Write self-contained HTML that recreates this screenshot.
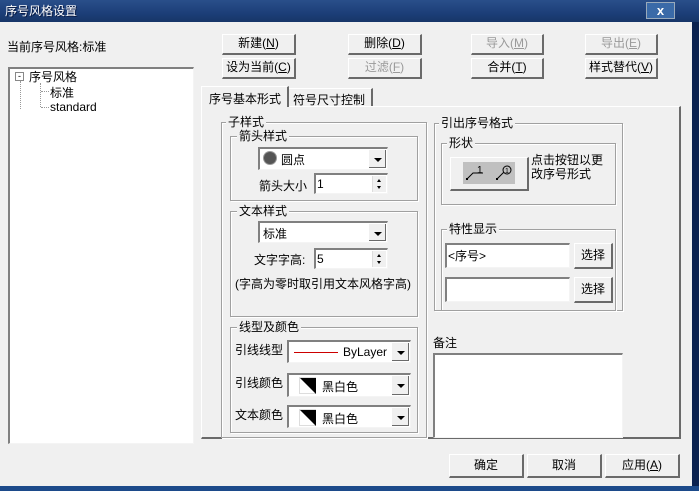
<!DOCTYPE html><html><head><meta charset="utf-8"><style>
*{box-sizing:border-box;margin:0;padding:0}
body{width:699px;height:491px;overflow:hidden;background:#0b2250;font-family:"Liberation Sans","Noto Sans CJK SC","WenQuanYi Zen Hei",sans-serif;font-size:12px;color:#000;position:relative}
.a{position:absolute}
#win{left:0;top:22px;width:692px;height:466px;background:#f0f0f0}
#title{left:0;top:0;width:699px;height:22px;background:linear-gradient(#2a4f8a,#1c3e78 60%,#173668);color:#fff;font-size:12px;line-height:14px;padding:4px 5px;text-shadow:1px 1px 0 #0a1a40}
.btn{position:absolute;background:#f0f0f0;border-top:1px solid #fff;border-left:1px solid #fff;border-right:2px solid #6a6a6a;border-bottom:2px solid #6a6a6a;text-align:center;line-height:17px;font-size:12px}
.dis{color:#9a9a9a}
.sunk{position:absolute;background:#fff;border-top:2px solid #808080;border-left:2px solid #808080;border-right:1px solid #f4f4f4;border-bottom:1px solid #f4f4f4}
.grp{position:absolute;border:1px solid #a0a0a0;box-shadow:inset 1px 1px 0 #fff,1px 1px 0 #fff}
.lg{position:absolute;top:-8px;left:6px;background:#f0f0f0;padding:0 2px;line-height:14px}
.dd{position:absolute;right:1px;top:1px;bottom:1px;width:17px;background:#f0f0f0;border-right:1px solid #6a6a6a;border-bottom:1px solid #6a6a6a}
.dd:after{content:"";position:absolute;left:5px;top:8px;border:4px solid transparent;border-top:4px solid #000;border-bottom:0}
.sp{position:absolute;right:1px;top:1px;bottom:1px;width:14px;background:#f0f0f0;border-left:1px solid #ddd}
.sp:before{content:"";position:absolute;left:4px;top:3px;border:2px solid transparent;border-bottom:3px solid #000;border-top:0}
.sp:after{content:"";position:absolute;left:4px;bottom:3px;border:2px solid transparent;border-top:3px solid #000;border-bottom:0}
.tri{position:absolute;width:17px;height:17px;background:#fff;border:1px solid #ddd}
.tri:after{content:"";position:absolute;left:0;top:0;border-top:16px solid #000;border-left:16px solid transparent}
</style></head><body>
<div class="a" id="title">序号风格设置</div>
<div class="a" style="left:646px;top:2px;width:29px;height:17px;border:1px solid #9ab;background:#3a6aa8;color:#fff;font-weight:bold;text-align:center;line-height:15px;font-size:13px">x</div>
<div class="a" id="win"></div>
<div class="a" style="left:692px;top:22px;width:7px;height:469px;background:#0b2250"></div>
<div class="a" style="left:0;top:486px;width:699px;height:5px;background:#1c4a8a"></div>

<div class="a" style="left:7px;top:38px">当前序号风格:标准</div>
<div class="sunk" style="left:8px;top:67px;width:186px;height:377px">
 <div class="a" style="left:5px;top:3px;width:9px;height:9px;border:1px solid #888;font-size:9px;line-height:6px;text-align:center;background:#fff">-</div>
 <div class="a" style="left:19px;top:-1px">序号风格</div>
 <div class="a" style="left:10px;top:12px;height:28px;border-left:1px dotted #999"></div>
 <div class="a" style="left:31px;top:22px;width:8px;border-top:1px dotted #999"></div>
 <div class="a" style="left:31px;top:38px;width:8px;border-top:1px dotted #999"></div>
 <div class="a" style="left:30px;top:14px;height:24px;border-left:1px dotted #999"></div>
 <div class="a" style="left:40px;top:15px">标准</div>
 <div class="a" style="left:40px;top:31px">standard</div>
</div>

<div class="btn" style="left:222px;top:34px;width:74px;height:21px">新建(<u>N</u>)</div>
<div class="btn" style="left:348px;top:34px;width:74px;height:21px">删除(<u>D</u>)</div>
<div class="btn dis" style="left:471px;top:34px;width:73px;height:21px">导入(<u>M</u>)</div>
<div class="btn dis" style="left:585px;top:34px;width:73px;height:21px">导出(<u>E</u>)</div>
<div class="btn" style="left:222px;top:58px;width:74px;height:21px">设为当前(<u>C</u>)</div>
<div class="btn dis" style="left:348px;top:58px;width:74px;height:21px">过滤(<u>F</u>)</div>
<div class="btn" style="left:471px;top:58px;width:73px;height:21px">合并(<u>T</u>)</div>
<div class="btn" style="left:585px;top:58px;width:73px;height:21px">样式替代(<u>V</u>)</div>

<div class="a" style="left:201px;top:106px;width:480px;height:333px;border-top:1px solid #fff;border-left:1px solid #fff;border-right:2px solid #6a6a6a;border-bottom:2px solid #6a6a6a"></div>
<div class="a" style="left:201px;top:86px;width:88px;height:21px;background:#f0f0f0;border-top:1px solid #fff;border-left:1px solid #fff;border-right:2px solid #6a6a6a;padding:3px 0 0 7px">序号基本形式</div>
<div class="a" style="left:289px;top:88px;width:84px;height:18px;border-top:1px solid #fff;border-right:2px solid #6a6a6a;padding:2px 0 0 4px">符号尺寸控制</div>

<div class="grp" style="left:221px;top:122px;width:206px;height:316px"><div class="lg" style="left:4px">子样式</div></div>
<div class="grp" style="left:230px;top:136px;width:188px;height:65px"><div class="lg">箭头样式</div></div>
<div class="sunk" style="left:258px;top:147px;width:130px;height:23px"><div class="a" style="left:4px;top:3px;width:12px;height:12px;background:#555;border-radius:50%;box-shadow:0 0 0 1px #999"></div><div class="a" style="left:21px;top:2px">圆点</div><div class="dd"></div></div>
<div class="a" style="left:259px;top:177px">箭头大小</div>
<div class="sunk" style="left:314px;top:173px;width:74px;height:21px"><div class="a" style="left:1px;top:2px">1</div><div class="sp"></div></div>

<div class="grp" style="left:230px;top:211px;width:188px;height:106px"><div class="lg">文本样式</div></div>
<div class="sunk" style="left:258px;top:221px;width:130px;height:22px"><div class="a" style="left:3px;top:2px">标准</div><div class="dd"></div></div>
<div class="a" style="left:254px;top:251px">文字字高:</div>
<div class="sunk" style="left:314px;top:248px;width:74px;height:21px"><div class="a" style="left:1px;top:2px">5</div><div class="sp"></div></div>
<div class="a" style="left:235px;top:275px">(字高为零时取引用文本风格字高)</div>

<div class="grp" style="left:230px;top:327px;width:188px;height:106px"><div class="lg">线型及颜色</div></div>
<div class="a" style="left:235px;top:341px">引线线型</div>
<div class="sunk" style="left:287px;top:340px;width:124px;height:23px"><div class="a" style="left:5px;top:10px;width:44px;border-top:1px solid #c00"></div><div class="a" style="left:54px;top:3px">ByLayer</div><div class="dd"></div></div>
<div class="a" style="left:235px;top:374px">引线颜色</div>
<div class="sunk" style="left:287px;top:373px;width:124px;height:24px"><div class="tri" style="left:10px;top:2px"></div><div class="a" style="left:33px;top:3px">黑白色</div><div class="dd"></div></div>
<div class="a" style="left:235px;top:406px">文本颜色</div>
<div class="sunk" style="left:287px;top:405px;width:124px;height:23px"><div class="tri" style="left:10px;top:2px"></div><div class="a" style="left:33px;top:3px">黑白色</div><div class="dd"></div></div>

<div class="grp" style="left:434px;top:123px;width:189px;height:188px"><div class="lg" style="left:4px">引出序号格式</div></div>
<div class="grp" style="left:441px;top:143px;width:175px;height:62px"><div class="lg" style="left:5px">形状</div></div>
<div class="btn" style="left:450px;top:157px;width:79px;height:34px;padding:4px 0 0 12px"><svg width="52" height="22" style="display:block;background:#c0c0c0"><text x="14" y="11" font-size="10" font-family="Liberation Sans">1</text><path d="M4 17 L10 11 L20 11 M34 17 L41 10" stroke="#000" fill="none"/><circle cx="44" cy="8" r="4" fill="none" stroke="#000"/><text x="42" y="11" font-size="7">1</text><rect x="3" y="16" width="2" height="2"/><rect x="33" y="16" width="2" height="2"/></svg></div>
<div class="a" style="left:531px;top:153px;line-height:14px">点击按钮以更<br>改序号形式</div>

<div class="grp" style="left:441px;top:229px;width:175px;height:82px"><div class="lg" style="left:5px">特性显示</div></div>
<div class="sunk" style="left:445px;top:243px;width:125px;height:25px"><div class="a" style="left:1px;top:2px">&lt;序号&gt;</div></div>
<div class="btn" style="left:574px;top:243px;width:39px;height:26px;line-height:23px">选择</div>
<div class="sunk" style="left:445px;top:277px;width:125px;height:25px"></div>
<div class="btn" style="left:574px;top:277px;width:39px;height:26px;line-height:23px">选择</div>

<div class="a" style="left:433px;top:334px">备注</div>
<div class="sunk" style="left:433px;top:353px;width:190px;height:85px"></div>

<div class="btn" style="left:449px;top:454px;width:75px;height:24px;line-height:21px">确定</div>
<div class="btn" style="left:527px;top:454px;width:75px;height:24px;line-height:21px">取消</div>
<div class="btn" style="left:605px;top:454px;width:75px;height:24px;line-height:21px">应用(<u>A</u>)</div>
</body></html>
